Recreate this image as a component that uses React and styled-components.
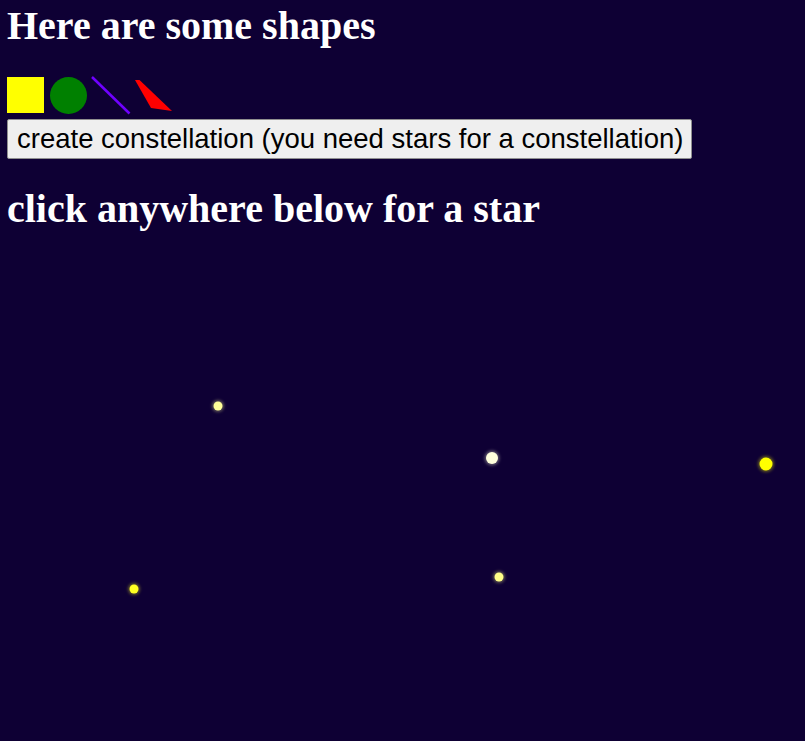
import React from "react";
import styled, { createGlobalStyle } from "styled-components";

const GlobalStyle = createGlobalStyle`
    html, body {
        margin: 0;
        background: #0e0034;
    }
    body {
        font-family: "Liberation Serif", "Times New Roman", serif;
        color: #fff;
    }
`;

// star positions are page coordinates; the sky starts at y = 228
const SKY_TOP = 228;
const stars = [
    { x: 218, y: 405, r: 4.5, color: "#ffff99" },
    { x: 492, y: 457, r: 6, color: "#ffffdd" },
    { x: 766, y: 463, r: 6.5, color: "#ffff00" },
    { x: 134, y: 588, r: 4.5, color: "#ffff22" },
    { x: 499, y: 576, r: 4.5, color: "#ffff88" },
];

export default function App() {
    return (
        <>
            <GlobalStyle />
            <Page>
                <Heading>Here are some shapes</Heading>
                <ShapeRow>
                    <svg width="37" height="37" viewBox="0 0 37 37">
                        <rect x="0" y="0" width="37" height="36" fill="#ffff00" />
                    </svg>
                    <svg width="37" height="37" viewBox="0 0 37 37">
                        <circle cx="18.5" cy="18.5" r="18.5" fill="#008000" />
                    </svg>
                    <svg width="37" height="37" viewBox="0 0 37 37">
                        <line x1="0" y1="0" x2="37.5" y2="36.5" stroke="#7000ff" strokeWidth="2.5" />
                    </svg>
                    <svg width="37" height="37" viewBox="0 0 37 37">
                        <polygon points="0,3 4.5,3 37,34 16,31" fill="#ff0000" />
                    </svg>
                </ShapeRow>
                <Button>create constellation (you need stars for a constellation)</Button>
                <Heading $last>click anywhere below for a star</Heading>
                <Sky>
                    <svg width="805" height="513">
                        <defs>
                            <filter id="glow" x="-1" y="-1" width="3" height="3">
                                <feGaussianBlur stdDeviation="1.5" />
                            </filter>
                        </defs>
                        {stars.map((s, i) => (
                            <g key={i} transform={`translate(${s.x}, ${s.y - SKY_TOP})`}>
                                <circle r={s.r + 1.5} fill={s.color} opacity="0.35" filter="url(#glow)" />
                                <circle r={s.r} fill={s.color} />
                            </g>
                        ))}
                    </svg>
                </Sky>
            </Page>
        </>
    );
}

const Page = styled.main`
    display: flex;
    flex-direction: column;
    align-items: flex-start;
    padding: 6px 0 0 7px;
`;
const Heading = styled.h2`
    font-size: 40px;
    font-weight: bold;
    line-height: 40px;
    margin: 0 0 ${(p) => (p.$last ? "0" : "31px")} 0;
`;
const ShapeRow = styled.div`
    display: flex;
    gap: 6px;
    align-items: flex-start;
    height: 37px;
    & > svg {
        flex-shrink: 0;
        overflow: visible;
    }
    & > svg:nth-child(3) {
        margin-left: -1px;
    }
`;
const Button = styled.button`
    font-family: "Liberation Sans", Arial, sans-serif;
    font-size: 27.5px;
    line-height: 32px;
    color: #000;
    background: #efefef;
    border: 1px solid #8f8f8f;
    border-radius: 2px;
    padding: 3px 8px 3px 9px;
    margin: 5px 0 30px 0;
`;
const Sky = styled.div`
    margin-left: -7px;
    line-height: 0;
`;
